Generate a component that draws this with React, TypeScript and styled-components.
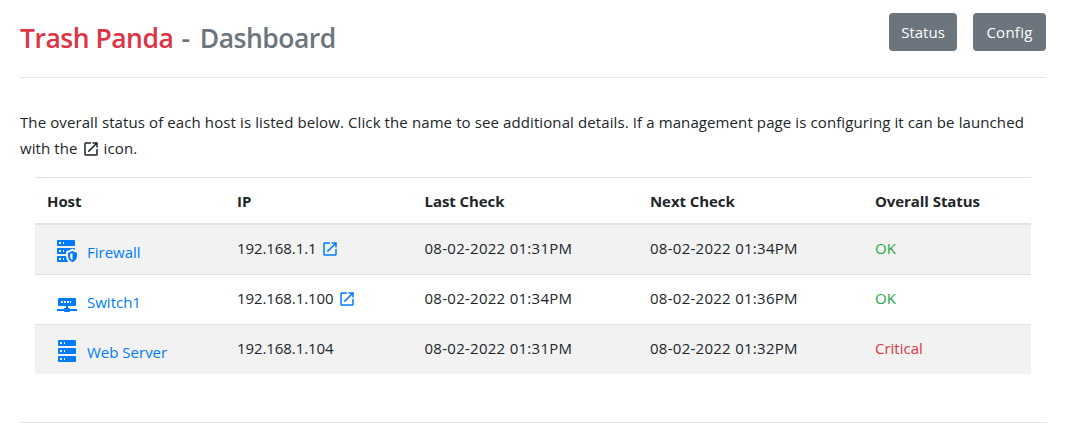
import React from "react";
import styled, { createGlobalStyle } from "styled-components";

const GlobalStyle = createGlobalStyle`
  *, *::before, *::after { box-sizing: border-box; }
  body {
    margin: 0;
    background: #fff;
    color: #212529;
    font-family: "Segoe UI", "Open Sans", "Noto Sans", sans-serif;
    font-size: 15px;
    line-height: 26px;
    overflow: hidden;
  }
`;

const Page = styled.div`
  width: 1066px;
  padding: 13px 20px 0;
`;

const Header = styled.header`
  display: flex;
  justify-content: space-between;
  align-items: flex-start;
  height: 64px;
`;

const Title = styled.h1`
  margin: 8px 0 0;
  font-size: 26.5px;
  line-height: 34px;
  font-weight: 600;
  letter-spacing: -0.5px;
  color: #6c757d;
  white-space: nowrap;
`;

const Brand = styled.span`
  color: #dc3545;
`;

const Dash = styled.span`
  letter-spacing: 1.4px;
`;

const Actions = styled.nav`
  display: flex;
  gap: 16px;
`;

const Button = styled.button<{ $width: number }>`
  width: ${(p) => p.$width}px;
  height: 38px;
  padding: 0;
  border: 0;
  border-radius: 4px;
  background: #6c757d;
  color: #fff;
  font: inherit;
  letter-spacing: ${(p) => (p.$width > 70 ? 0.25 : 0)}px;
`;

const Rule = styled.hr`
  height: 1px;
  margin: 0;
  border: 0;
  background: #e5e5e5;
`;

const Intro = styled.p`
  margin: 31px 0 16px;
  height: 52px;
`;

const Line = styled.span<{ $spacing?: number }>`
  display: block;
  white-space: nowrap;
  letter-spacing: ${(p) => p.$spacing ?? 0}px;
`;

const TableWrap = styled.div`
  padding: 0 15px 48px;
`;

const Table = styled.table`
  width: 100%;
  table-layout: fixed;
  border-collapse: separate;
  border-spacing: 0;
`;

const HeadCell = styled.th`
  height: 48px;
  padding: 0 12px;
  border-top: 1px solid #dee2e6;
  border-bottom: 2px solid #dee2e6;
  text-align: left;
  font-weight: 700;
  letter-spacing: -0.07px;
`;

const Row = styled.tr`
  &:nth-child(odd) { background: #f2f2f2; }
  &:not(:first-child) td { height: 50px; border-top: 1px solid #dee2e6; }
`;

const Cell = styled.td<{ $color?: string; $spacing?: number }>`
  height: 49px;
  padding: 10px 12px 0;
  vertical-align: top;
  line-height: 26px;
  color: ${(p) => p.$color ?? "inherit"};
  letter-spacing: ${(p) => p.$spacing ?? 0}px;
  white-space: nowrap;
`;

const HostLink = styled.a`
  display: flex;
  align-items: flex-start;
  gap: 8px;
  padding: 4px 0 0 8px;
  color: #007bff;
  text-decoration: none;
`;

const Label = styled.span`
  line-height: 26px;
`;

const Glyph = styled.svg<{ $size: number; $color?: string }>`
  width: ${(p) => p.$size}px;
  height: ${(p) => p.$size}px;
  fill: ${(p) => p.$color ?? "currentColor"};
  vertical-align: -4px;
`;

const LaunchLink = styled.a`
  margin-left: 1px;
  color: #007bff;
`;

const icons = {
  open: "M14,3V5H17.59L7.76,14.83L9.17,16.24L19,6.41V10H21V3M19,19H5V5H12V3H5C3.89,3 3,3.9 3,5V19A2,2 0 0,0 5,21H19A2,2 0 0,0 21,19V12H19V19Z",
  firewall:
    "M3,1H19A1,1 0 0,1 20,2V6A1,1 0 0,1 19,7H3A1,1 0 0,1 2,6V2A1,1 0 0,1 3,1M3,9H19A1,1 0 0,1 20,10V10.67L17.5,9.56L11,12.44V15H3A1,1 0 0,1 2,14V10A1,1 0 0,1 3,9M3,17H11C11.06,19.25 12,21.4 13.46,23H3A1,1 0 0,1 2,22V18A1,1 0 0,1 3,17M8,5H9V3H8V5M8,13H9V11H8V13M8,21H9V19H8V21M4,3V5H6V3H4M4,11V13H6V11H4M4,19V21H6V19H4M17.5,12L22,14V17C22,19.78 20.08,22.37 17.5,23C14.92,22.37 13,19.78 13,17V14L17.5,12M17.5,13.94L15,15.06V17.72C15,19.26 16.07,20.7 17.5,21.06V13.94Z",
  network:
    "M13,19H14A1,1 0 0,1 15,20H22V22H15A1,1 0 0,1 14,23H10A1,1 0 0,1 9,22H2V20H9A1,1 0 0,1 10,19H11V17H4A1,1 0 0,1 3,16V10A1,1 0 0,1 4,9H20A1,1 0 0,1 21,10V16A1,1 0 0,1 20,17H13V19M6,12V14H8V12H6M9,12V14H11V12H9M12,12V14H14V12H12M15,12V14H16V12H15Z",
  server:
    "M4,1H20A1,1 0 0,1 21,2V6A1,1 0 0,1 20,7H4A1,1 0 0,1 3,6V2A1,1 0 0,1 4,1M4,9H20A1,1 0 0,1 21,10V14A1,1 0 0,1 20,15H4A1,1 0 0,1 3,14V10A1,1 0 0,1 4,9M4,17H20A1,1 0 0,1 21,18V22A1,1 0 0,1 20,23H4A1,1 0 0,1 3,22V18A1,1 0 0,1 4,17M9,5H10V3H9V5M9,13H10V11H9V13M9,21H10V19H9V21M5,3V5H7V3H5M5,11V13H7V11H5M5,19V21H7V19H5Z",
};

type IconName = keyof typeof icons;

const Icon = ({ name, size, color }: { name: IconName; size: number; color?: string }) => (
  <Glyph viewBox="0 0 24 24" $size={size} $color={color} aria-hidden>
    <path d={icons[name]} />
  </Glyph>
);

const hosts: {
  icon: IconName;
  name: string;
  ip: string;
  managed: boolean;
  last: string;
  next: string;
  status: "OK" | "Critical";
}[] = [
  { icon: "firewall", name: "Firewall", ip: "192.168.1.1", managed: true, last: "08-02-2022 01:31PM", next: "08-02-2022 01:34PM", status: "OK" },
  { icon: "network", name: "Switch1", ip: "192.168.1.100", managed: true, last: "08-02-2022 01:34PM", next: "08-02-2022 01:36PM", status: "OK" },
  { icon: "server", name: "Web Server", ip: "192.168.1.104", managed: false, last: "08-02-2022 01:31PM", next: "08-02-2022 01:32PM", status: "Critical" },
];

const columns = [
  { label: "Host", width: 190 },
  { label: "IP", width: 187.5 },
  { label: "Last Check", width: 225.5 },
  { label: "Next Check", width: 225 },
  { label: "Overall Status", width: 168 },
];

export default function App() {
  return (
    <Page>
      <GlobalStyle />
      <Header>
        <Title>
          <Brand>Trash Panda</Brand>
          <Dash> - </Dash>
          Dashboard
        </Title>
        <Actions>
          <Button $width={68}>Status</Button>
          <Button $width={73}>Config</Button>
        </Actions>
      </Header>
      <Rule />
      <Intro>
        <Line $spacing={0.103}>
          The overall status of each host is listed below. Click the name to see additional details. If a management page is configuring it can be launched
        </Line>
        <Line $spacing={0.1}>
          with the <Icon name="open" size={18} /> icon.
        </Line>
      </Intro>
      <TableWrap>
        <Table>
          <colgroup>
            {columns.map((c) => (
              <col key={c.label} width={c.width} />
            ))}
          </colgroup>
          <thead>
            <tr>
              {columns.map((c) => (
                <HeadCell key={c.label}>{c.label}</HeadCell>
              ))}
            </tr>
          </thead>
          <tbody>
            {hosts.map((h) => (
              <Row key={h.name}>
                <Cell>
                  <HostLink>
                    <Icon name={h.icon} size={24} />
                    <Label>{h.name}</Label>
                  </HostLink>
                </Cell>
                <Cell $spacing={-0.08}>
                  {h.ip}{" "}
                  {h.managed && (
                    <LaunchLink>
                      <Icon name="open" size={18} />
                    </LaunchLink>
                  )}
                </Cell>
                <Cell $spacing={0.27}>{h.last}</Cell>
                <Cell $spacing={0.27}>{h.next}</Cell>
                <Cell $color={h.status === "OK" ? "#28a745" : "#dc3545"}>{h.status}</Cell>
              </Row>
            ))}
          </tbody>
        </Table>
      </TableWrap>
      <Rule />
    </Page>
  );
}
